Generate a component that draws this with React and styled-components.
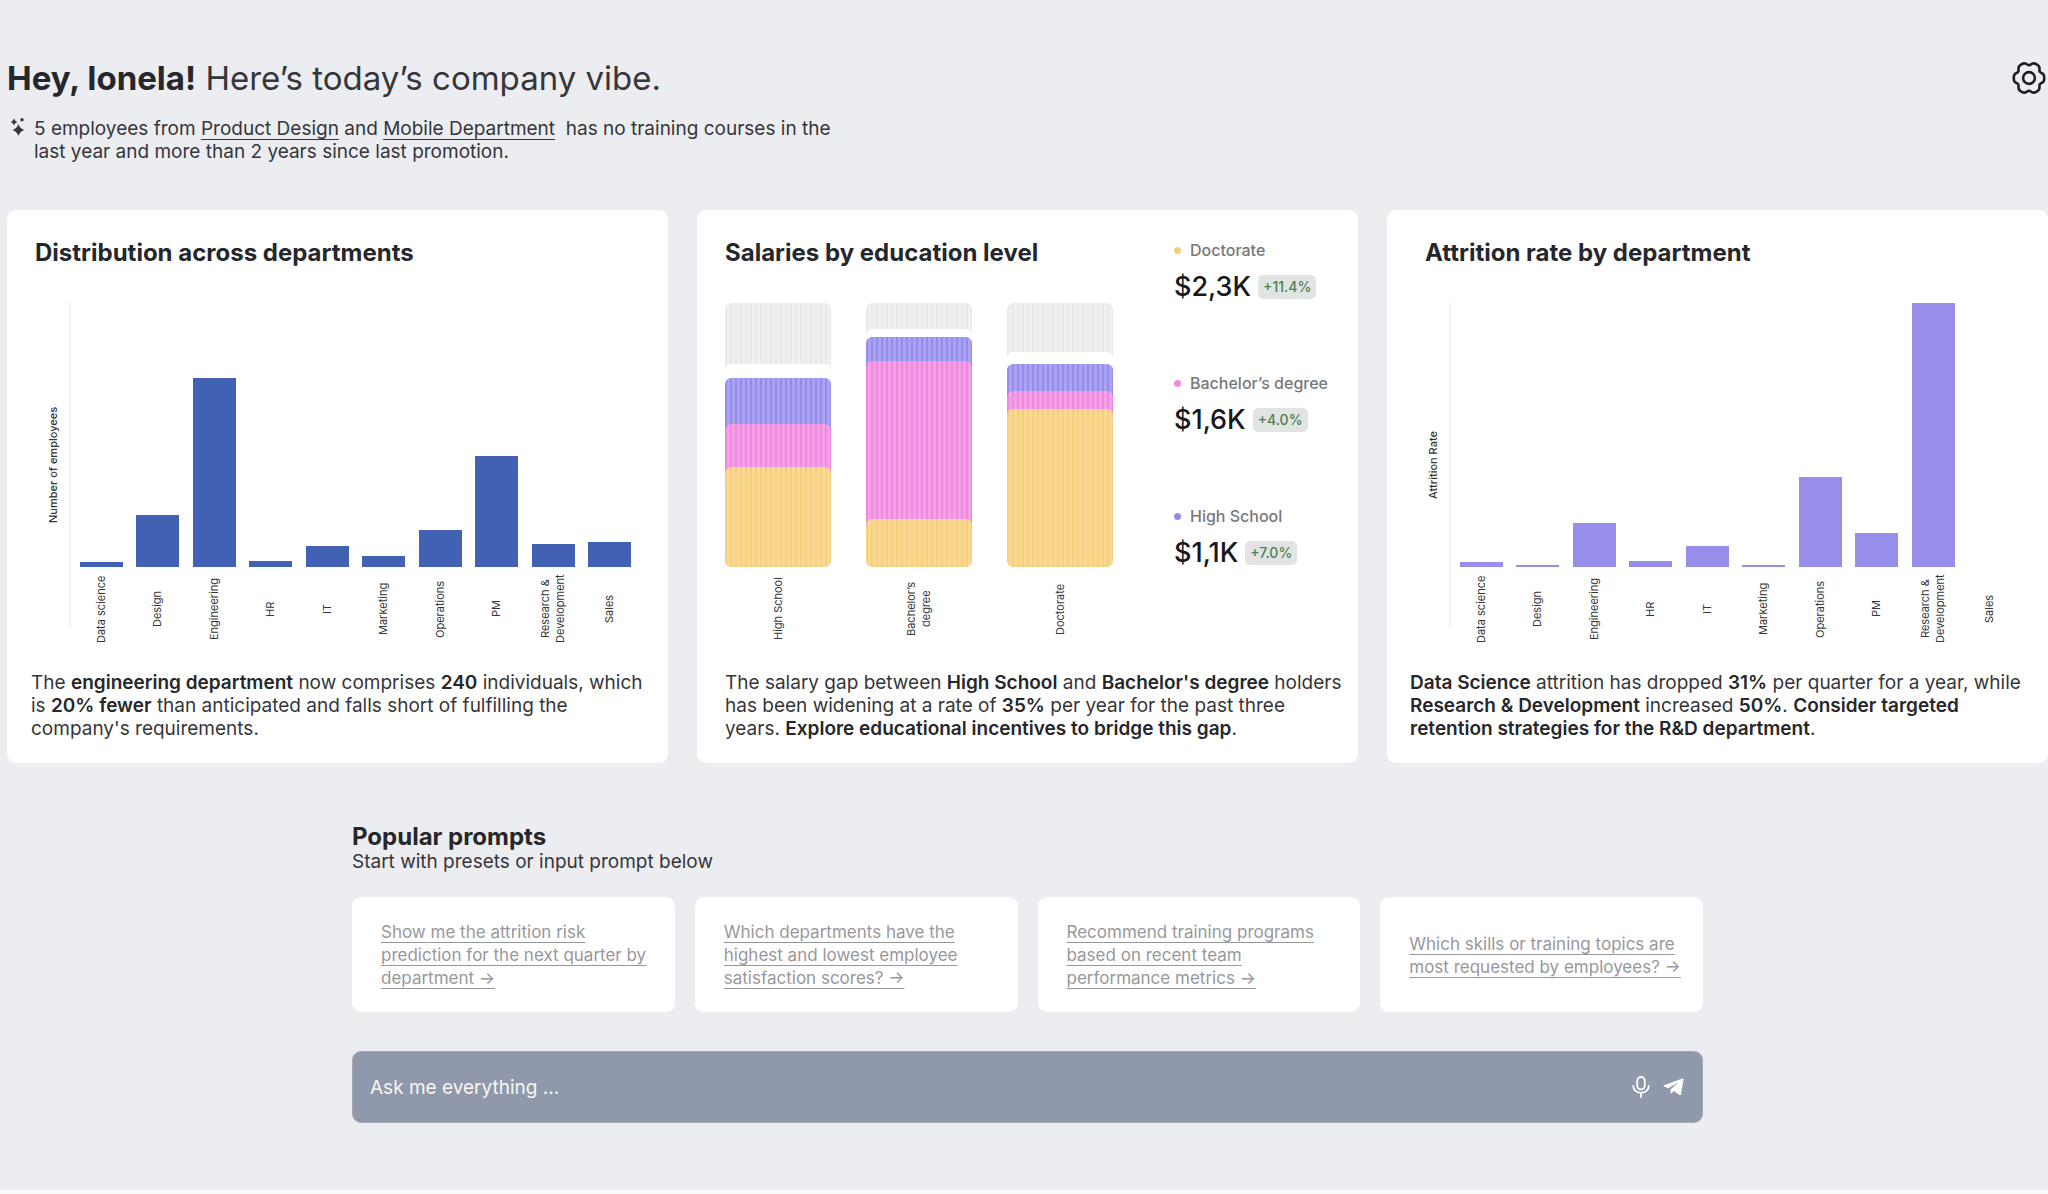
import React from "react";
import styled, { createGlobalStyle } from "styled-components";

const Global = createGlobalStyle`
  *, *::before, *::after { box-sizing: border-box; }
  body {
    margin: 0;
    background: #fafafb;
    color: #35363a;
    font-family: Inter, "Liberation Sans", sans-serif;
    font-size: 19px;
    line-height: 23px;
  }
  h1, h2, h3, p, ul, figure { margin: 0; padding: 0; }
  ul { list-style: none; }
  strong { font-weight: 600; color: #26272b; }
`;

const Page = styled.main`
  display: flex;
  flex-direction: column;
  min-height: calc(100vh - 4px);
  padding: 56px 0 67px 7px;
  background: #ecedf1;
`;

const Header = styled.header`
  display: flex;
  justify-content: space-between;
  align-items: flex-start;
  margin-bottom: 47px;
`;

const Greeting = styled.h1`
  margin-bottom: 17px;
  font-size: 33px;
  line-height: 44px;
  font-weight: 400;

  strong { font-weight: 700; }
`;

const Insight = styled.div`
  display: flex;
  gap: 7px;
  padding-left: 3px;

  svg { flex: none; }
`;

const InlineLink = styled.a`
  color: inherit;
  text-decoration: underline;
  text-decoration-thickness: 1px;
  text-underline-offset: 4px;
  text-decoration-skip-ink: none;
`;

const IconButton = styled.button`
  display: flex;
  padding: 0;
  border: 0;
  background: none;
  color: ${(p) => p.$color};
  cursor: pointer;
`;

const SettingsSlot = styled.div`
  padding: 5px 2px 0 0;
`;

const Cards = styled.section`
  display: grid;
  grid-template-columns: repeat(3, minmax(0, 1fr));
  gap: 29px;
  margin-bottom: 61px;
`;

const Card = styled.article`
  display: flex;
  flex-direction: column;
  padding: 28px 0 23px;
  border-radius: 9px;
  background: #fff;
`;

const CardTitle = styled.h2`
  padding-left: ${(p) => p.$inset}px;
  font-size: 24px;
  line-height: 30px;
  font-weight: 700;
  color: #26272b;
`;

const CardText = styled.p`
  margin-top: auto;
  padding: 0 16px 0 ${(p) => p.$inset}px;
`;

const Chart = styled.figure`
  display: flex;
  height: 342px;
  margin: 35px 37px 26px 38px;
`;

const AxisTitle = styled.figcaption`
  display: flex;
  align-items: center;
  justify-content: center;
  width: 16px;
  height: 324px;
  margin-right: 8px;
  writing-mode: vertical-rl;
  transform: rotate(180deg);
  font-size: 11px;
  line-height: 15px;
  font-weight: 500;
  white-space: nowrap;
`;

const Plot = styled.ul`
  flex: 1;
  display: flex;
  justify-content: space-between;
  padding-left: 11px;
  background: linear-gradient(#f3f3f5, #f3f3f5) left top / 2px 324px no-repeat;
`;

const Column = styled.li`
  display: flex;
  flex-direction: column;
  align-items: center;
  width: ${(p) => p.$width}px;
`;

const Track = styled.div`
  display: flex;
  flex-direction: column;
  justify-content: flex-end;
  width: 100%;
  height: 264px;
`;

const Bar = styled.div`
  height: ${(p) => p.$value}px;
  background: ${(p) => p.$color};
`;

const ColumnLabel = styled.span`
  display: flex;
  align-items: center;
  justify-content: center;
  height: 68px;
  margin-top: 8px;
  writing-mode: vertical-rl;
  transform: rotate(180deg);
  font-size: 11px;
  line-height: 15px;
  text-align: center;
  white-space: pre-line;
`;

const SalaryBody = styled.div`
  display: flex;
  justify-content: space-between;
`;

const SalaryChart = styled.ul`
  display: flex;
  gap: 35px;
  height: 342px;
  margin: 35px 0 26px 28px;
`;

const stripes = (a, b) =>
  `repeating-linear-gradient(90deg, ${a} 0 2px, ${b} 2px 5px)`;

const Stack = styled(Track)`
  justify-content: flex-start;
  overflow: hidden;
  border-radius: 6px;
`;

const Segment = styled.div`
  flex: none;
  height: ${(p) => p.$value + 6}px;
  margin-bottom: -6px;
  border-radius: 6px 6px 0 0;
  background: ${(p) => p.$fill};
`;

const Legend = styled.ul`
  display: flex;
  flex-direction: column;
  gap: 71px;
  width: 184px;
`;

const LegendName = styled.div`
  display: flex;
  align-items: center;
  gap: 9px;
  margin-bottom: 12px;
  font-size: 16px;
  line-height: 24px;
  font-weight: 500;
  color: #77787c;

  &::before {
    content: "";
    width: 7px;
    height: 7px;
    border-radius: 50%;
    background: ${(p) => p.$dot};
  }
`;

const LegendValue = styled.div`
  display: flex;
  align-items: center;
  gap: 7px;
  font-size: 27px;
  line-height: 26px;
  font-weight: 500;
  color: #17181b;
`;

const Delta = styled.span`
  padding: 0 5px;
  border-radius: 5px;
  background: #e2e3e3;
  font-size: 14px;
  line-height: 24px;
  color: #4b8150;
`;

const Prompts = styled.section`
  width: 100%;
  max-width: 1351px;
  margin: 0 auto;
`;

const PromptsTitle = styled.h2`
  font-size: 24px;
  line-height: 26px;
  font-weight: 700;
  color: #26272b;
`;

const PromptGrid = styled.ul`
  display: grid;
  grid-template-columns: repeat(4, minmax(0, 1fr));
  gap: 20px;
  margin: 24px 0 39px;
`;

const PromptCard = styled.li`
  display: flex;
  align-items: center;
  min-height: 115px;
  padding: 2px 0 0 29px;
  border-radius: 9px;
  background: #fff;
`;

const PromptLink = styled(InlineLink)`
  color: #97989b;
  font-size: 17px;
  white-space: pre-line;
`;

const AskBar = styled.form`
  display: flex;
  align-items: center;
  gap: 13px;
  height: 72px;
  padding: 0 18px 0 17px;
  border: 1px solid #a4a9b4;
  border-radius: 9px;
  background: #9098ac;
`;

const AskInput = styled.input`
  flex: 1;
  min-width: 0;
  padding: 0;
  border: 0;
  outline: 0;
  background: none;
  font: inherit;
  color: #f7f6f2;

  &::placeholder { color: #f7f6f2; opacity: 1; }
`;

// Six-lobed gear outline: the second harmonic flattens the lobes and sharpens the notches.
const gearPath =
  Array.from({ length: 96 }, (_, i) => {
    const t = (i * Math.PI) / 48;
    const r = 14.2 + 1.4 * Math.cos(6 * t) - 0.4 * Math.cos(12 * t);
    const x = (r * Math.cos(t)).toFixed(2);
    const y = (r * 1.03 * Math.sin(t)).toFixed(2);
    return `${i ? "L" : "M"}${x} ${y}`;
  }).join("") + "Z";

const GearIcon = () => (
  <svg width="34" height="34" viewBox="-17 -17 34 34" fill="none" stroke="currentColor" strokeWidth="2.6" strokeLinejoin="round">
    <path d={gearPath} />
    <circle r="5.9" />
  </svg>
);

const SparkleIcon = () => (
  <svg width="17" height="23" viewBox="0 0 17 23" fill="currentColor">
    <path d="M8.4 7 Q9.8 11.6 14.2 13 Q9.8 14.4 8.4 19 Q7 14.4 2.6 13 Q7 11.6 8.4 7Z" />
    <path d="M4 1.6 Q4.8 4.2 7.3 5 Q4.8 5.8 4 8.4 Q3.2 5.8 .7 5 Q3.2 4.2 4 1.6Z" />
    <circle cx="12" cy="2.8" r="1.7" />
  </svg>
);

const MicIcon = () => (
  <svg width="18" height="22" viewBox="0 0 18 22" fill="none" stroke="currentColor" strokeWidth="1.8" strokeLinecap="round">
    <rect x="5.2" y="1" width="7.6" height="12.4" rx="3.8" />
    <path d="M1.2 9.8c0 4.2 3.4 7 7.8 7s7.8-2.8 7.8-7M9 16.8v4.2" />
  </svg>
);

const PlaneIcon = () => (
  <svg width="21" height="18" viewBox="0 0 21 18" fill="currentColor">
    <path d="M19.4 .5 L1 7.2 Q.2 7.8 1.1 8.5 L5.3 10.3 L15.3 4.2 L7.6 11.4 L7.6 14.9 Q7.8 15.7 8.5 15.2 L11 12.9 L16.4 17 Q17.6 17.4 17.9 16.2 L20.6 1.6 Q20.6 .3 19.4 .5Z" />
  </svg>
);

const departments = [
  "Data science", "Design", "Engineering", "HR", "IT", "Marketing",
  "Operations", "PM", "Research &\nDevelopment", "Sales",
];
const headcount = [5, 52, 189, 6, 21, 11, 37, 111, 23, 25];
const attrition = [5, 2, 44, 6, 21, 2, 90, 34, 264, 0];

const salaries = [
  { name: "High School", parts: [61, 14, 46, 43, 100] },
  { name: "Bachelor’s\ndegree", parts: [26, 8, 24, 158, 48] },
  { name: "Doctorate", parts: [49, 12, 27, 18, 158] },
];
const fills = [
  stripes("#e7e8ea", "#eff0f1"),
  "#fff",
  stripes("#958ceb", "#aaa3f2"),
  stripes("#ef88df", "#f3a0e6"),
  stripes("#f7cf80", "#f9d891"),
];

const legend = [
  { name: "Doctorate", value: "$2,3K", delta: "+11.4%", dot: "#f7cd78" },
  { name: "Bachelor’s degree", value: "$1,6K", delta: "+4.0%", dot: "#f088e0" },
  { name: "High School", value: "$1,1K", delta: "+7.0%", dot: "#958ceb" },
];

const prompts = [
  "Show me the attrition risk\nprediction for the next quarter by\ndepartment →",
  "Which departments have the\nhighest and lowest employee\nsatisfaction scores? →",
  "Recommend training programs\nbased on recent team\nperformance metrics →",
  "Which skills or training topics are\nmost requested by employees? →",
];

function BarChart({ axis, values, color }) {
  return (
    <Chart>
      <AxisTitle>{axis}</AxisTitle>
      <Plot>
        {departments.map((name, i) => (
          <Column key={name} $width={43}>
            <Track>
              <Bar $value={values[i]} $color={color} />
            </Track>
            <ColumnLabel>{name}</ColumnLabel>
          </Column>
        ))}
      </Plot>
    </Chart>
  );
}

export default function App() {
  return (
    <>
      <Global />
      <Page>
        <Header>
          <div>
            <Greeting><strong>Hey, Ionela!</strong> Here’s today’s company vibe.</Greeting>
            <Insight>
              <SparkleIcon />
              <p>
                5 employees from <InlineLink href="#design">Product Design</InlineLink> and{" "}
                <InlineLink href="#mobile">Mobile Department</InlineLink>&nbsp; has no training courses in the
                <br />last year and more than 2 years since last promotion.
              </p>
            </Insight>
          </div>
          <SettingsSlot>
            <IconButton type="button" aria-label="Settings" $color="#1d1e21"><GearIcon /></IconButton>
          </SettingsSlot>
        </Header>

        <Cards>
          <Card>
            <CardTitle $inset={28}>Distribution across departments</CardTitle>
            <BarChart axis="Number of employees" values={headcount} color="#4161b4" />
            <CardText $inset={24}>
              The <strong>engineering department</strong> now comprises <strong>240</strong> individuals, which
              <br />is <strong>20% fewer</strong> than anticipated and falls short of fulfilling the
              <br />company's requirements.
            </CardText>
          </Card>

          <Card>
            <SalaryBody>
              <div>
                <CardTitle $inset={28}>Salaries by education level</CardTitle>
                <SalaryChart>
                  {salaries.map((s) => (
                    <Column key={s.name} $width={106}>
                      <Stack>
                        {s.parts.map((v, i) => <Segment key={i} $value={v} $fill={fills[i]} />)}
                      </Stack>
                      <ColumnLabel>{s.name}</ColumnLabel>
                    </Column>
                  ))}
                </SalaryChart>
              </div>
              <Legend>
                {legend.map((l) => (
                  <li key={l.name}>
                    <LegendName $dot={l.dot}>{l.name}</LegendName>
                    <LegendValue>{l.value}<Delta>{l.delta}</Delta></LegendValue>
                  </li>
                ))}
              </Legend>
            </SalaryBody>
            <CardText $inset={28}>
              The salary gap between <strong>High School</strong> and <strong>Bachelor's degree</strong> holders
              <br />has been widening at a rate of <strong>35%</strong> per year for the past three
              <br />years. <strong>Explore educational incentives to bridge this gap</strong>.
            </CardText>
          </Card>

          <Card>
            <CardTitle $inset={38}>Attrition rate by department</CardTitle>
            <BarChart axis="Attrition Rate" values={attrition} color="#978eec" />
            <CardText $inset={23}>
              <strong>Data Science</strong> attrition has dropped <strong>31%</strong> per quarter for a year, while
              <br /><strong>Research &amp; Development</strong> increased <strong>50%</strong>. <strong>Consider targeted</strong>
              <br /><strong>retention strategies for the R&amp;D department</strong>.
            </CardText>
          </Card>
        </Cards>

        <Prompts>
          <PromptsTitle>Popular prompts</PromptsTitle>
          <p>Start with presets or input prompt below</p>
          <PromptGrid>
            {prompts.map((text) => (
              <PromptCard key={text}>
                <PromptLink href="#ask">{text}</PromptLink>
              </PromptCard>
            ))}
          </PromptGrid>
          <AskBar>
            <AskInput id="ask" type="text" aria-label="Ask me everything" placeholder="Ask me everything ..." />
            <IconButton type="button" aria-label="Dictate" $color="#fff"><MicIcon /></IconButton>
            <IconButton type="submit" aria-label="Send" $color="#fff"><PlaneIcon /></IconButton>
          </AskBar>
        </Prompts>
      </Page>
    </>
  );
}
